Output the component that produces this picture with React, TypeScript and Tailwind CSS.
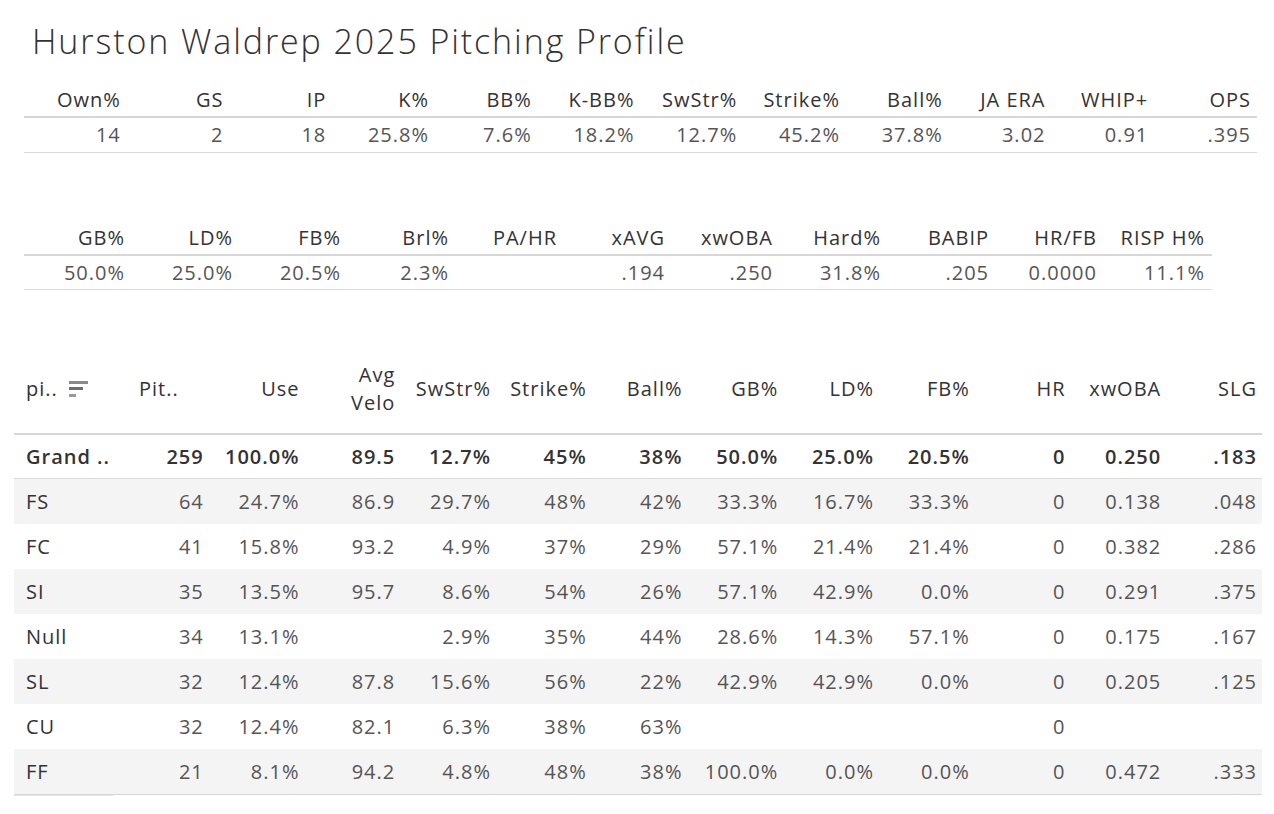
import React from 'react';

const summaryHeaders = ['Own%', 'GS', 'IP', 'K%', 'BB%', 'K-BB%', 'SwStr%', 'Strike%', 'Ball%', 'JA ERA', 'WHIP+', 'OPS'];
const summaryValues = ['14', '2', '18', '25.8%', '7.6%', '18.2%', '12.7%', '45.2%', '37.8%', '3.02', '0.91', '.395'];

const contactHeaders = ['GB%', 'LD%', 'FB%', 'Brl%', 'PA/HR', 'xAVG', 'xwOBA', 'Hard%', 'BABIP', 'HR/FB', 'RISP H%'];
const contactValues = ['50.0%', '25.0%', '20.5%', '2.3%', '', '.194', '.250', '31.8%', '.205', '0.0000', '11.1%'];

const pitchRows: { name: string; values: string[] }[] = [
  { name: 'FS', values: ['64', '24.7%', '86.9', '29.7%', '48%', '42%', '33.3%', '16.7%', '33.3%', '0', '0.138', '.048'] },
  { name: 'FC', values: ['41', '15.8%', '93.2', '4.9%', '37%', '29%', '57.1%', '21.4%', '21.4%', '0', '0.382', '.286'] },
  { name: 'SI', values: ['35', '13.5%', '95.7', '8.6%', '54%', '26%', '57.1%', '42.9%', '0.0%', '0', '0.291', '.375'] },
  { name: 'Null', values: ['34', '13.1%', '', '2.9%', '35%', '44%', '28.6%', '14.3%', '57.1%', '0', '0.175', '.167'] },
  { name: 'SL', values: ['32', '12.4%', '87.8', '15.6%', '56%', '22%', '42.9%', '42.9%', '0.0%', '0', '0.205', '.125'] },
  { name: 'CU', values: ['32', '12.4%', '82.1', '6.3%', '38%', '63%', '', '', '', '0', '', ''] },
  { name: 'FF', values: ['21', '8.1%', '94.2', '4.8%', '48%', '38%', '100.0%', '0.0%', '0.0%', '0', '0.472', '.333'] },
];

const grandTotal = ['259', '100.0%', '89.5', '12.7%', '45%', '38%', '50.0%', '25.0%', '20.5%', '0', '0.250', '.183'];

function SortIcon() {
  return (
    <svg width="20" height="18" viewBox="0 0 20 18" className="ml-[11px]">
      <rect x="0" y="1" width="19" height="3" fill="#8a8a8a" />
      <rect x="0" y="7" width="14" height="3" fill="#6f6f6f" />
      <rect x="0" y="14" width="7" height="3" fill="#9a9a9a" />
    </svg>
  );
}

export default function App() {
  return (
    <div className="w-[1274px] h-[814px] bg-white font-['Open_Sans',sans-serif] text-[#333] overflow-hidden">
      <div className="h-[83px] flex items-center pl-[32px]">
        <h1 className="text-[34px] font-light tracking-[1.9px] text-[#333]">Hurston Waldrep 2025 Pitching Profile</h1>
      </div>

      <div className="ml-[24px] w-[1233px] text-[20px] tracking-[1px]">
        <div className="grid grid-cols-12 h-[35px] items-center border-b-2 border-[#d6d6d6]">
          {summaryHeaders.map((h) => (
            <div key={h} className="text-right pr-[6px] text-[#333]">{h}</div>
          ))}
        </div>
        <div className="grid grid-cols-12 h-[35px] items-center border-b border-[#d9d9d9]">
          {summaryValues.map((v, i) => (
            <div key={i} className="text-right pr-[6px] text-[#555]">{v}</div>
          ))}
        </div>
      </div>

      <div className="ml-[24px] mt-[68px] w-[1188px] text-[20px] tracking-[1px]">
        <div className="grid grid-cols-11 h-[35px] items-center border-b-2 border-[#d6d6d6]">
          {contactHeaders.map((h) => (
            <div key={h} className="text-right pr-[7px] text-[#333]">{h}</div>
          ))}
        </div>
        <div className="grid grid-cols-11 h-[34px] items-center border-b border-[#d9d9d9]">
          {contactValues.map((v, i) => (
            <div key={i} className="text-right pr-[7px] text-[#555]">{v}</div>
          ))}
        </div>
      </div>

      <div className="ml-[14px] mt-[54px] w-[1248px] text-[20px] tracking-[1px]">
        <div className="grid grid-cols-[99px_repeat(12,95.75px)] h-[91px] items-center border-b-2 border-[#d6d6d6]">
          <div className="flex items-center pl-[12px]">
            <span>pi..</span>
            <SortIcon />
          </div>
          <div className="text-right pr-[30px]">Pit..</div>
          <div className="text-right pr-[5px]">Use</div>
          <div className="text-right pr-[5px] leading-[28px]">Avg<br />Velo</div>
          <div className="text-right pr-[5px]">SwStr%</div>
          <div className="text-right pr-[5px]">Strike%</div>
          <div className="text-right pr-[5px]">Ball%</div>
          <div className="text-right pr-[5px]">GB%</div>
          <div className="text-right pr-[5px]">LD%</div>
          <div className="text-right pr-[5px]">FB%</div>
          <div className="text-right pr-[5px]">HR</div>
          <div className="text-right pr-[5px]">xwOBA</div>
          <div className="text-right pr-[5px]">SLG</div>
        </div>

        <div className="grid grid-cols-[99px_repeat(12,95.75px)] h-[44px] items-center border-b border-[#dcdcdc] font-semibold text-[#333]">
          <div className="pl-[12px]">Grand ..</div>
          {grandTotal.map((v, i) => (
            <div key={i} className="text-right pr-[5px]">{v}</div>
          ))}
        </div>

        {pitchRows.map((row, r) => (
          <div
            key={row.name}
            className={`grid grid-cols-[99px_repeat(12,95.75px)] h-[45px] items-center ${r % 2 === 0 ? 'bg-[#f4f4f4]' : 'bg-white'}`}
          >
            <div className="pl-[12px] text-[#333]">{row.name}</div>
            {row.values.map((v, i) => (
              <div key={i} className="text-right pr-[5px] text-[#555]">{v}</div>
            ))}
          </div>
        ))}
        <div className="h-px bg-[#d6d6d6]" />
        <div className="w-[99px] h-px bg-[#e4e4e4]" />
      </div>
    </div>
  );
}
